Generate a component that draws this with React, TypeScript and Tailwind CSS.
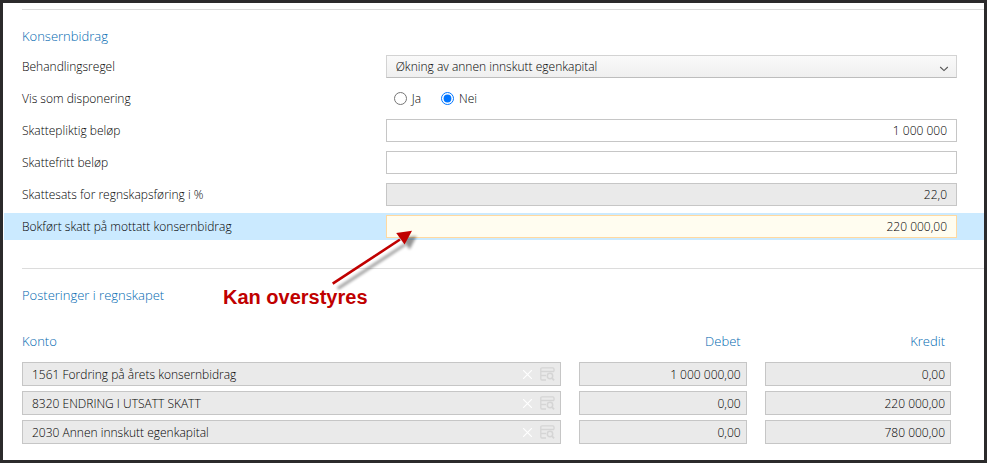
import { useState, type ReactNode } from 'react';

const treatments = ['Økning av annen innskutt egenkapital', 'Resultatført konsernbidrag'];

const postings = [
  { account: '1561 Fordring på årets konsernbidrag', debit: '1 000 000,00', credit: '0,00' },
  { account: '8320 ENDRING I UTSATT SKATT', debit: '0,00', credit: '220 000,00' },
  { account: '2030 Annen innskutt egenkapital', debit: '0,00', credit: '780 000,00' }
];

const LookupIcon = () => (
  <svg width="15" height="14" viewBox="0 0 15 14" fill="none" stroke="currentColor" strokeWidth="1.3" aria-hidden="true">
    <path d="M6 13H2A1.2 1.2 0 0 1 0.8 11.8V2A1.2 1.2 0 0 1 2 0.8H12.8A1.2 1.2 0 0 1 14 2V4.5" />
    <path d="M1 4.5H14M1 8.5H6" />
    <circle cx="10" cy="9" r="2.7" strokeWidth="1.5" />
    <path d="M12 11L14 13.4" strokeWidth="1.8" />
  </svg>
);

const ClearIcon = () => (
  <svg width="9" height="9" viewBox="0 0 9 9" stroke="currentColor" strokeWidth="1.1" aria-hidden="true">
    <path d="M0 0L9 9M9 0L0 9" />
  </svg>
);

const Arrow = () => (
  <svg width="100" height="70" viewBox="0 0 100 70" aria-hidden="true">
    <defs>
      <filter id="arrow-blur" x="-20%" y="-20%" width="140%" height="140%">
        <feGaussianBlur stdDeviation="1.6" />
      </filter>
    </defs>
    <g transform="translate(5 5)" fill="#000" stroke="#000" opacity="0.42" filter="url(#arrow-blur)">
      <path d="M7.7 58.7L75 14.5" strokeWidth="2.6" />
      <path d="M86.7 6L71.3 8L79.7 19.5Z" stroke="none" />
    </g>
    <path d="M7.7 58.7L75 14.5" stroke="#c00000" strokeWidth="2.6" />
    <path d="M87 5.8L71.2 8L79.6 19.6Z" fill="#c00000" />
  </svg>
);

type RowProps = {
  label: string;
  htmlFor?: string;
  active?: boolean;
  children: ReactNode;
};

const Row = ({ label, htmlFor, active, children }: RowProps) => (
  <div className={`flex h-[27px] items-center pl-[18px] pr-[27px] ${active ? 'bg-[#cbeaff]' : ''}`}>
    <label htmlFor={htmlFor} className="w-[38.9%] shrink-0">
      {label}
    </label>
    <div className="flex min-w-0 flex-1 items-center">{children}</div>
  </div>
);

const fieldClass = 'h-[23px] w-full rounded-none border px-[9px] text-right outline-none';
const cellClass = 'block h-6 w-full border border-[#c6c6c6] bg-[#eaeaea] text-black outline-none';

export default function App() {
  const [dispose, setDispose] = useState('nei');
  const [taxable, setTaxable] = useState('1 000 000');
  const [taxFree, setTaxFree] = useState('');
  const [bookedTax, setBookedTax] = useState('220 000,00');

  return (
    <main className="relative min-h-screen border-3 border-[#2b2a2b] bg-white pl-px pt-1.5 font-['Open_Sans',sans-serif] text-[12px] font-[340] leading-4 text-black">
      <section>
        <h2 className="ml-[18px] border-t border-[#dcdcdc] pt-4 text-[13px] font-[320] leading-5 text-[#0068b0]">Konsernbidrag</h2>
        <div className="mt-[7px] flex flex-col gap-[5px]">
          <Row label="Behandlingsregel" htmlFor="treatment">
            <div className="relative w-full">
              <select
                id="treatment"
                className="block h-[23px] w-full appearance-none rounded-none border border-[#d3d3d3] border-b-[#bdbdbd] bg-linear-to-b from-[#fafafa] to-[#efefef] pl-[9px] pr-8 outline-none"
              >
                {treatments.map((name) => (
                  <option key={name}>{name}</option>
                ))}
              </select>
              <svg
                className="pointer-events-none absolute right-2 top-[11px]"
                width="10"
                height="6"
                viewBox="0 0 10 6"
                fill="none"
                stroke="#555"
                strokeWidth="1.1"
                aria-hidden="true"
              >
                <path d="M1.2 1L5 4.6L8.8 1" />
              </svg>
            </div>
          </Row>
          <Row label="Vis som disponering">
            <div className="flex gap-5 pl-2" role="radiogroup" aria-label="Vis som disponering">
              <label className="flex items-center gap-[5px]">
                <input type="radio" name="dispose" checked={dispose === 'ja'} onChange={() => setDispose('ja')} className="size-[13px]" />
                Ja
              </label>
              <label className="flex items-center gap-[5px]">
                <input type="radio" name="dispose" checked={dispose === 'nei'} onChange={() => setDispose('nei')} className="size-[13px]" />
                Nei
              </label>
            </div>
          </Row>
          <Row label="Skattepliktig beløp" htmlFor="taxable">
            <input id="taxable" value={taxable} onChange={(e) => setTaxable(e.target.value)} className={`${fieldClass} border-[#c6c6c6] bg-white`} />
          </Row>
          <Row label="Skattefritt beløp" htmlFor="taxfree">
            <input id="taxfree" value={taxFree} onChange={(e) => setTaxFree(e.target.value)} className={`${fieldClass} border-[#c6c6c6] bg-white`} />
          </Row>
          <Row label="Skattesats for regnskapsføring i %" htmlFor="rate">
            <input id="rate" value="22,0" readOnly className={`${fieldClass} border-[#c6c6c6] bg-[#eaeaea]`} />
          </Row>
          <Row label="Bokført skatt på mottatt konsernbidrag" htmlFor="booked" active>
            <input id="booked" value={bookedTax} onChange={(e) => setBookedTax(e.target.value)} className={`${fieldClass} border-[#ffd9a0] bg-[#fffdf0]`} />
          </Row>
        </div>
      </section>

      <section className="mt-7 pl-[18px]">
        <h2 className="border-t border-[#dcdcdc] pt-4 text-[13px] font-[320] leading-5 text-[#0068b0]">Posteringer i regnskapet</h2>
        <div className="pr-[33px] pt-[26px]">
          <table className="w-full table-fixed">
            <thead>
              <tr className="text-[13px] leading-5 text-[#0068b0]">
                <th className="pb-[11px] text-left font-[320]">Konto</th>
                <th className="w-[20%] pb-[11px] pr-1.5 text-right font-[320]">Debet</th>
                <th className="w-[22%] pb-[11px] pr-1.5 text-right font-[320]">Kredit</th>
              </tr>
            </thead>
            <tbody>
              {postings.map((row) => (
                <tr key={row.account}>
                  <td className="pb-[5px]">
                    <div className="flex h-6 items-center border border-[#c6c6c6] bg-[#eaeaea] pr-[5px]">
                      <input aria-label="Konto" value={row.account} readOnly className="h-full min-w-0 flex-1 pl-[9px] text-black outline-none" />
                      <button type="button" disabled aria-label="Fjern konto" className="mr-2 text-white">
                        <ClearIcon />
                      </button>
                      <button type="button" disabled aria-label="Søk konto" className="text-[#d5d5d5]">
                        <LookupIcon />
                      </button>
                    </div>
                  </td>
                  <td className="pb-[5px] pl-[18px]">
                    <input aria-label="Debet" value={row.debit} readOnly className={`${cellClass} pr-[5px] text-right`} />
                  </td>
                  <td className="pb-[5px] pl-[18px]">
                    <input aria-label="Kredit" value={row.credit} readOnly className={`${cellClass} pr-[5px] text-right`} />
                  </td>
                </tr>
              ))}
            </tbody>
          </table>
        </div>
      </section>

      {/* callout pointing at the editable tax field */}
      <div className="pointer-events-none absolute left-[220px] top-[222px]">
        <div className="ml-[102px]">
          <Arrow />
        </div>
        <p className="-mt-2.5 font-['Liberation_Sans',Arial,sans-serif] text-[20px] font-bold leading-6 text-[#c00000]">Kan overstyres</p>
      </div>
    </main>
  );
}
